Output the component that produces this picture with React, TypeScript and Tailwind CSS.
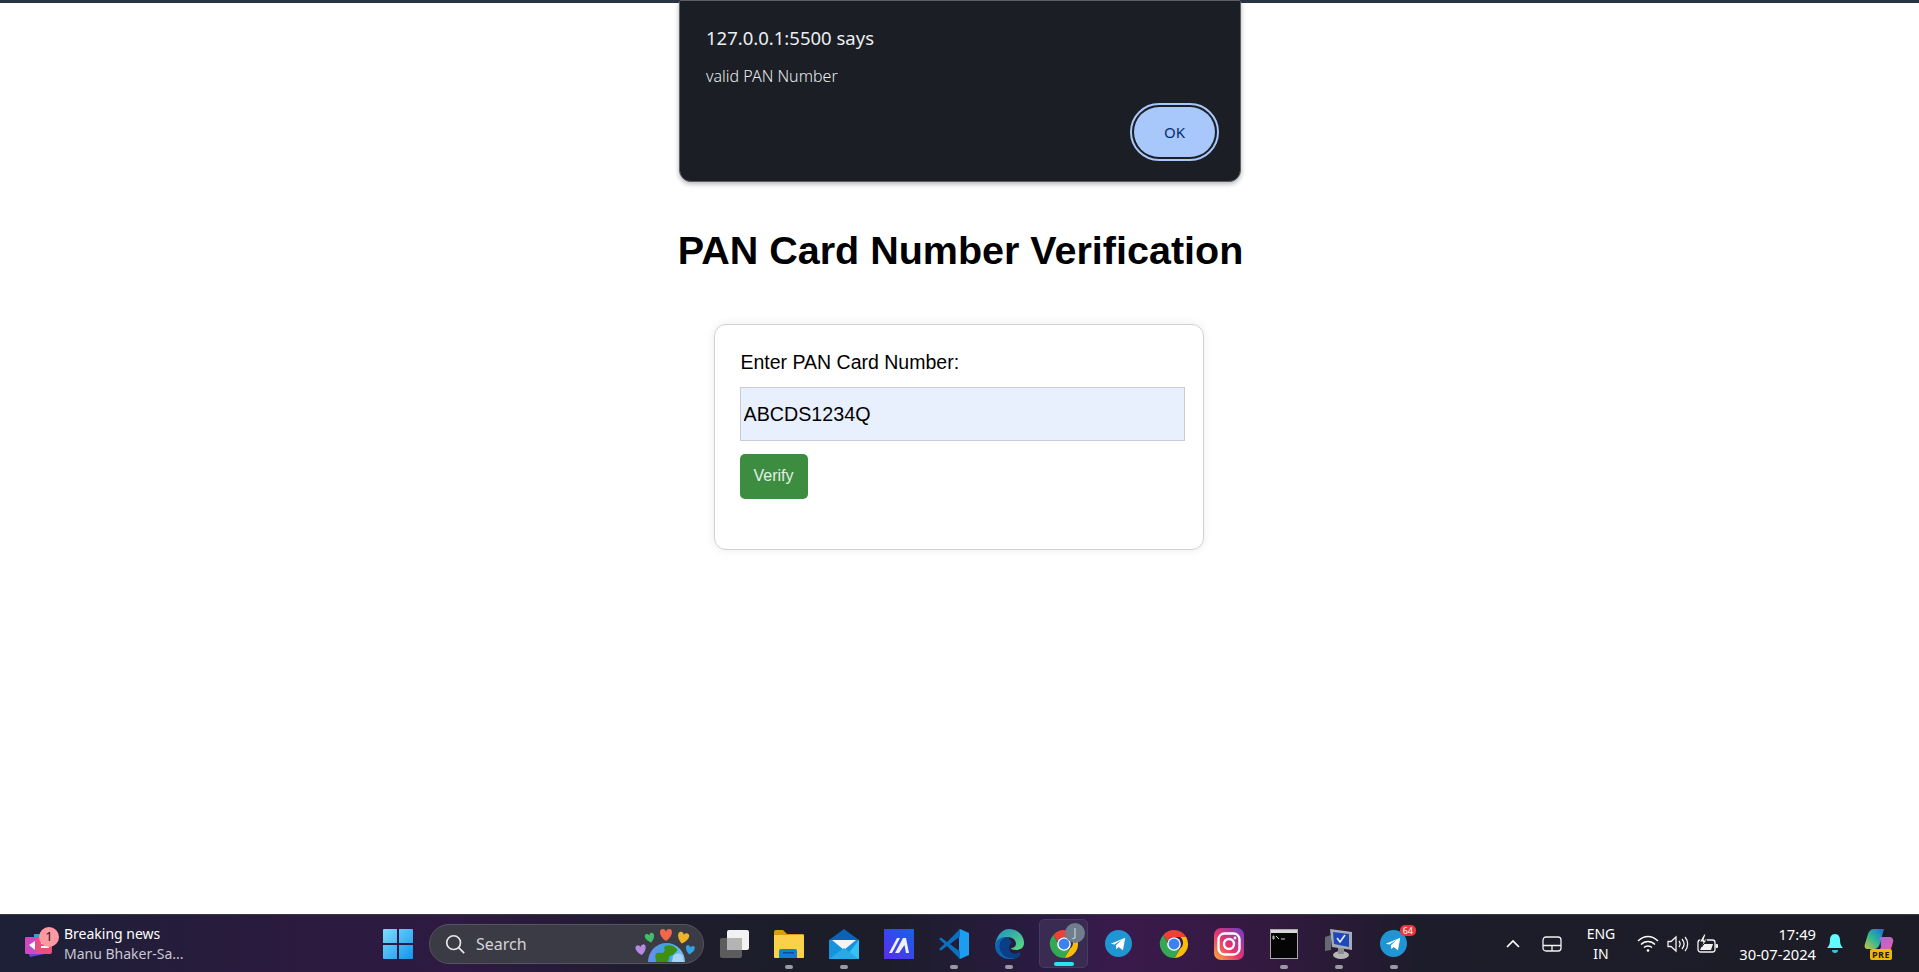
import React from "react";

const Chrome = ({ size = 30 }: { size?: number }) => (
  <svg width={size} height={size} viewBox="0 0 32 32">
    <path d="M16 1a15 15 0 0 1 13 7.5H16a7.5 7.5 0 0 0-7 4.700L4.600 6.300A15 15 0 0 1 16 1z" fill="#ea4335" />
    <path d="M29 8.500A15 15 0 0 1 16.500 31l6-10.300A7.500 7.500 0 0 0 22.500 8.500z" fill="#fbbc04" />
    <path d="M16.500 31A15 15 0 0 1 4.600 6.300l6.400 11.200a7.500 7.500 0 0 0 11.500 3.200z" fill="#34a853" />
    <circle cx="16" cy="16" r="7.300" fill="#fff" />
    <circle cx="16" cy="16" r="5.800" fill="#3b82f0" />
  </svg>
);

const Telegram = ({ size = 27 }: { size?: number }) => (
  <svg width={size} height={size} viewBox="0 0 28 28">
    <circle cx="14" cy="14" r="14" fill="#1f96d3" />
    <path d="M6 14.200 21 8l-2.400 13-4.500-3.300-2.300 2.300-.6-4.200 6.300-5.600-7.800 4.800z" fill="#fff" />
  </svg>
);

const heart = "M0 4.500C-6 0-5-4.500-2.500-4.500-1-4.500-.3-3.500 0-2.500.3-3.500 1-4.500 2.500-4.500 5-4.500 6 0 0 4.500z";

const icons: { key: string; node: React.ReactNode; dot?: boolean }[] = [
  {
    key: "taskview",
    node: (
      <svg width="30" height="30" viewBox="0 0 30 30">
        <rect x="1" y="9" width="22" height="20" rx="2" fill="#5c5c5c" />
        <rect x="8" y="1" width="22" height="20" rx="2" fill="#f2f2f2" />
        <rect x="8" y="9" width="15" height="12" fill="#b4b4b4" />
      </svg>
    ),
  },
  {
    key: "explorer",
    dot: true,
    node: (
      <svg width="32" height="30" viewBox="0 0 32 30">
        <path d="M1 3a2 2 0 0 1 2-2h7l4 4h16a1 1 0 0 1 1 1v4H1z" fill="#d99e0c" />
        <path d="M1 6h29a1 1 0 0 1 1 1v21a1 1 0 0 1-1 1H2a1 1 0 0 1-1-1z" fill="#fbd04b" />
        <path d="M6 22a2 2 0 0 1 2-2h14a2 2 0 0 1 2 2v7H6z" fill="#0f7fd0" />
        <rect x="10" y="23" width="11" height="1.500" fill="#0a4f8c" />
      </svg>
    ),
  },
  {
    key: "mail",
    dot: true,
    node: (
      <svg width="32" height="30" viewBox="0 0 32 30">
        <path d="M1 11 16 0l15 11v4H1z" fill="#0c62b5" />
        <path d="M1 11h30v19H1z" fill="#1593dd" />
        <path d="M31 11v19H16z" fill="#34c3f2" />
        <path d="M4 11h24L16 21z" fill="#f4f4f4" />
        <path d="M1 30 16 19l15 11z" fill="#27abe8" />
      </svg>
    ),
  },
  {
    key: "mathworks",
    node: (
      <svg width="30" height="30" viewBox="0 0 30 30">
        <defs>
          <linearGradient id="ma" x1="0" y1="1" x2="1" y2="0">
            <stop offset="0" stopColor="#5a2bf5" />
            <stop offset="1" stopColor="#1663e0" />
          </linearGradient>
        </defs>
        <rect width="30" height="30" fill="url(#ma)" />
        <path d="M5 24 13 9h3L8 24zM11 24 19 9h3l3 15h-3l-1.500-8L15 24z" fill="#eef2ff" />
      </svg>
    ),
  },
  {
    key: "vscode",
    dot: true,
    node: (
      <svg width="32" height="32" viewBox="0 0 32 32">
        <path d="M22 1 31 5v22l-9 4-1-1V2z" fill="#1b9df0" />
        <path d="M22 1 9 14 3 9.500 1 11l5.500 5L1 21l2 1.500L9 18l13 13v-7.500L12 16l10-7.500z" fill="#0a70bf" />
      </svg>
    ),
  },
  {
    key: "edge",
    dot: true,
    node: (
      <svg width="30" height="30" viewBox="0 0 30 30">
        <defs>
          <linearGradient id="edgeTop" x1="0" y1="0" x2="1" y2="1">
            <stop offset="0" stopColor="#1a8fc9" />
            <stop offset="1" stopColor="#5fdc7a" />
          </linearGradient>
        </defs>
        <path d="M15 0C23 0 30 6 30 14c0 5-4 7-8 7-3 0-5-1-5-2 3 0 5-2 5-4 0-5-6-8-11-6-4 1-8 5-10 8C2 7 8 0 15 0z" fill="url(#edgeTop)" />
        <path d="M1 17C2 10 7 8 12 8c-5 2-7 7-6 12 1 5 6 9 12 9 3 0 6-1 8-3-2 3-6 4-11 4C8 30 1 24 1 17z" fill="#0d63b5" />
        <path d="M12 8c-5 2-7 7-6 12 1 5 6 9 12 9 3 0 6-1 8-3v-3c-3 2-7 2-9 0-3-3-2-7 1-9-1-3-4-6-6-6z" fill="#0a3f86" />
      </svg>
    ),
  },
  { key: "chrome-active", node: null },
  { key: "telegram", node: <Telegram /> },
  { key: "chrome", node: <Chrome /> },
  {
    key: "instagram",
    node: (
      <svg width="30" height="32" viewBox="0 0 30 32">
        <defs>
          <linearGradient id="ig" x1="0" y1="1" x2="1" y2="0">
            <stop offset="0" stopColor="#fbb03b" />
            <stop offset="0.45" stopColor="#e8336d" />
            <stop offset="1" stopColor="#6a3fc9" />
          </linearGradient>
        </defs>
        <rect width="30" height="32" rx="7" fill="url(#ig)" />
        <rect x="4.500" y="5.500" width="21" height="21" rx="6" fill="none" stroke="#fff" strokeWidth="2.400" />
        <circle cx="15" cy="16" r="5" fill="none" stroke="#fff" strokeWidth="2.400" />
        <circle cx="21" cy="10" r="1.400" fill="#fff" />
      </svg>
    ),
  },
  {
    key: "terminal",
    dot: true,
    node: (
      <svg width="28" height="30" viewBox="0 0 28 30">
        <rect width="28" height="30" fill="#a9a9a9" />
        <rect x="1" y="1" width="26" height="3" fill="#d8d8d8" />
        <rect x="1" y="4" width="26" height="25" fill="#050505" />
        <path d="M3 7h1v3H3zM6 7l3 3M11 10h4" stroke="#cfcfcf" strokeWidth="1" fill="none" />
      </svg>
    ),
  },
  {
    key: "network",
    dot: true,
    node: (
      <svg width="30" height="32" viewBox="0 0 30 32">
        <path d="M6 1 28 4v18L8 19z" fill="#a5acb8" />
        <path d="M9 4 25 6v13L10 16z" fill="#1e48b8" />
        <path d="M13 10l3 4 5-7" fill="none" stroke="#e8eefc" strokeWidth="1.600" />
        <path d="M1 9l6-2v15l-6 1z" fill="#656a72" />
        <ellipse cx="17" cy="27" rx="8" ry="4" fill="#b6b6b6" />
        <rect x="14" y="20" width="6" height="6" fill="#8e8e8e" />
      </svg>
    ),
  },
  {
    key: "telegram-badge",
    dot: true,
    node: (
      <div className="relative">
        <Telegram />
        <span className="absolute -top-[5px] -right-[9px] rounded-[5px] bg-[#e5383b] px-[3px] font-['Noto_Sans',sans-serif] text-[9px] leading-[11px] text-white">
          64
        </span>
      </div>
    ),
  },
];

function News() {
  return (
    <div className="ml-[25px] flex w-[190px] items-center">
      <div className="relative h-[32px] w-[32px] shrink-0">
        <svg width="30" height="30" viewBox="0 0 30 30" className="absolute left-0 top-[4px]">
          <path d="M3 20l20-3 1 4-19 4z" fill="#6d43d8" />
          <path d="M9 2h13v6H9z" fill="#2f9fe0" />
          <rect x="0" y="5" width="27" height="17" rx="2" fill="#ec4f7c" />
          <path d="M0 7a2 2 0 0 1 2-2h9v17H2a2 2 0 0 1-2-2z" fill="#c94bc4" />
          <path d="M4 13l6-4v9z" fill="#fff" />
          <path d="M16 11h8M16 15h8" stroke="#fff" strokeWidth="1.800" />
        </svg>
        <span className="absolute left-[14px] -top-[1px] flex h-[20px] w-[20px] items-center justify-center rounded-full bg-[#ff9aa2] text-[13px] text-[#2a1620]">
          1
        </span>
      </div>
      <div className="ml-[7px] text-[14px] leading-[20px]">
        <div className="text-white">Breaking news</div>
        <div className="text-[#c9c6d0]">Manu Bhaker-Sa...</div>
      </div>
    </div>
  );
}

function SearchBox() {
  return (
    <div className="ml-[16px] mr-[1px] flex h-[40px] w-[275px] items-center rounded-full border border-[#55555f] bg-[#3b3b46] pl-[14px]">
      <svg width="22" height="22" viewBox="0 0 24 24" fill="none" stroke="#e8e8e8" strokeWidth="1.800">
        <circle cx="10.500" cy="10.500" r="7.500" />
        <path d="m16 16 6 6" />
      </svg>
      <span className="ml-[10px] text-[16px] text-[#d4d4d8]">Search</span>
      <svg width="62" height="38" viewBox="0 0 62 38" className="ml-auto mr-[6px]">
        <defs>
          <linearGradient id="earth" x1="0" y1="0" x2="1" y2="0">
            <stop offset="0" stopColor="#6f8df0" />
            <stop offset="0.5" stopColor="#38a3dc" />
            <stop offset="1" stopColor="#7cc4ee" />
          </linearGradient>
        </defs>
        <path d="M13 37a18.500 19 0 0 1 37 0z" fill="url(#earth)" />
        <path d="M21 37c0-4-2-7 1-9 3-1 5 1 7-1 2-3-1-4 1-6 5-2 9 0 12 3 1 2-2 3-3 5-2 2-5 1-5 4l-1 4z" fill="#3f8f10" />
        <path d="M38 31c3-3 6-3 9-1l2 7H37z" fill="#a6d4f2" />
        <g transform="translate(6 25) rotate(-10) scale(1.150)"><path d={heart} fill="#b58ae0" /></g>
        <g transform="translate(15 13) rotate(-15) scale(1.050)"><path d={heart} fill="#3fbf6a" /></g>
        <g transform="translate(31 10) scale(1.350)"><path d={heart} fill="#f2664a" /></g>
        <g transform="translate(48 13) rotate(15) scale(1.250)"><path d={heart} fill="#f0b429" /></g>
        <g transform="translate(55 25) rotate(10)"><path d={heart} fill="#2fa3e6" /></g>
      </svg>
    </div>
  );
}

function TaskIcons() {
  return (
    <div className="ml-[1px] flex h-full">
      {icons.map((ic) =>
        ic.key === "chrome-active" ? (
          <div key={ic.key} className="relative flex h-full w-[55px] items-center justify-center">
            <div className="relative flex h-[49px] w-[49px] items-center justify-center rounded-[5px] border border-[#4a3a62] bg-[#3a2b52]">
              <Chrome />
              <span className="absolute right-[2px] top-[3px] flex h-[20px] w-[20px] items-center justify-center rounded-full bg-[#6f7d8c] text-[12px] text-[#c8d0d8]">
                J
              </span>
              <span className="absolute bottom-[1px] left-[14px] h-[4px] w-[20px] rounded-full bg-[#22e6f2]" />
            </div>
          </div>
        ) : (
          <div key={ic.key} className="relative flex h-full w-[55px] items-center justify-center">
            {ic.node}
            {ic.dot && (
              <span className="absolute bottom-[3px] left-[24px] h-[4px] w-[8px] rounded-full bg-[#9a9aa2]" />
            )}
          </div>
        )
      )}
    </div>
  );
}

function Tray() {
  return (
    <div className="ml-auto flex h-full items-center text-white">
      <svg width="18" height="18" viewBox="0 0 18 18" fill="none" stroke="#fff" strokeWidth="1.700">
        <path d="m3 12 6-6 6 6" />
      </svg>
      <svg width="20" height="16" viewBox="0 0 20 16" fill="none" stroke="#f2f2f2" strokeWidth="1.300" className="ml-[20px]">
        <rect x="1" y="1" width="18" height="14" rx="3" />
        <path d="M1 9.500h18M10 9.500V15" />
      </svg>
      <div className="ml-[19px] w-[40px] text-center text-[14px] leading-[20px]">
        <div>ENG</div>
        <div>IN</div>
      </div>
      <svg width="22" height="18" viewBox="0 0 22 18" fill="none" stroke="#fff" strokeWidth="1.400" className="ml-[16px]">
        <path d="M1 6c6-6 14-6 20 0M4 9.500c4-4 10-4 14 0M7 12.500c2-2 6-2 8 0" />
        <circle cx="11" cy="15.500" r="1.300" fill="#fff" stroke="none" />
      </svg>
      <svg width="22" height="18" viewBox="0 0 22 18" fill="none" stroke="#f2f2f2" strokeWidth="1.300" className="ml-[8px]">
        <path d="M1 6.500v5h3l5 4.500V2L4 6.500z" />
        <path d="M12 6c1.500 2 1.500 4 0 6M15 4c2.500 3 2.500 7 0 10M18 2c3.500 4 3.500 10 0 14" />
      </svg>
      <svg width="22" height="20" viewBox="0 0 22 20" className="ml-[8px]">
        <rect x="1" y="6" width="17" height="12" rx="2.500" fill="none" stroke="#f2f2f2" strokeWidth="1.300" />
        <rect x="18.500" y="10" width="2.500" height="4" rx="1" fill="#f2f2f2" />
        <path d="M3 16h11l2-6H6z" fill="#f2f2f2" />
        <path d="M7 0 2.500 8H6l-1.500 5L10 6H7l2-6z" fill="#f2f2f2" stroke="#1c1c26" strokeWidth="1" />
      </svg>
      <div className="ml-[15px] w-[82px] text-right text-[14.7px] leading-[20px]">
        <div>17:49</div>
        <div>30-07-2024</div>
      </div>
      <svg width="18" height="22" viewBox="0 0 18 22" className="ml-[10px]">
        <path d="M9 1c3.500 0 5 3 5 6 0 4 1 6 3 8H1c2-2 3-4 3-8 0-3 1.500-6 5-6z" fill="#5ffbff" />
        <path d="M6 17h6c0 2-1 3-3 3s-3-1-3-3z" fill="#35c8d8" />
      </svg>
      <div className="relative ml-[20px] mr-[25px] h-[32px] w-[30px]">
        <svg width="30" height="26" viewBox="0 0 30 26">
          <defs>
            <linearGradient id="co1" x1="0" y1="1" x2="1" y2="0">
              <stop offset="0" stopColor="#c6c83a" />
              <stop offset="0.5" stopColor="#2bb59a" />
              <stop offset="1" stopColor="#2068e0" />
            </linearGradient>
            <linearGradient id="co2" x1="0" y1="0" x2="1" y2="1">
              <stop offset="0" stopColor="#9a6ae8" />
              <stop offset="1" stopColor="#ee5f9b" />
            </linearGradient>
          </defs>
          <path d="M10 1h10l-4 14c-1 4-3 6-7 6H4c-3 0-4-2-3-5l3-10c1-3 3-5 6-5z" fill="url(#co1)" />
          <path d="M16 9h9c3 0 5 2 4 5l-2 7c-1 3-3 4-6 4H11c3-1 5-3 6-6z" fill="url(#co2)" />
        </svg>
        <span className="absolute bottom-0 left-[6px] rounded-[2px] bg-[#f2b705] px-[2px] text-[9px] font-bold leading-[11px] tracking-[0.5px] text-[#1c1c1c]">
          PRE
        </span>
      </div>
    </div>
  );
}

export default function App() {
  return (
    <div className="flex h-[972px] w-full flex-col overflow-hidden bg-white font-['Liberation_Sans',Arial,sans-serif]">
      <div className="h-[3px] bg-[#2b3445]" />
      <main className="relative flex flex-1 flex-col items-center">
        <div className="absolute left-[679px] -top-[3px] h-[182px] w-[562px] rounded-b-[12px] rounded-t-[2px] border border-[#5a5e66] bg-[#1b1e24] pl-[26px] pt-[25px] font-['Noto_Sans',sans-serif] shadow-[0_2px_5px_rgba(0,0,0,0.3)]">
          <div className="text-[18.5px] leading-[24px] text-[#eceef2]">127.0.0.1:5500 says</div>
          <div className="mt-[16px] text-[16px] font-light leading-[20px] text-[#e8eaee]">valid PAN Number</div>
          <button className="absolute bottom-[24px] right-[25px] h-[50px] w-[81px] rounded-full bg-[#a8c7fa] text-[15px] text-[#062e6f] outline-2 outline-offset-2 outline-[#a8c7fa]">
            OK
          </button>
        </div>
        <h1 className="ml-[2px] mt-[224px] text-[39.5px] font-bold leading-[46px] text-black">
          PAN Card Number Verification
        </h1>
        <div className="ml-[-2px] mt-[51px] h-[226px] w-[490px] rounded-[12px] border border-[#d2d2d2] bg-white px-[25px] pt-[26px] shadow-[0_0_10px_rgba(0,0,0,0.08)]">
          <label className="ml-[1px] block text-[19.5px] leading-[23px] text-black">Enter PAN Card Number:</label>
          <input
            readOnly
            value="ABCDS1234Q"
            className="mt-[13px] block h-[54px] w-[445px] border border-[#c8cbd2] bg-[#e8f0fe] px-[3px] text-[19.7px] text-black outline-none"
          />
          <button className="mt-[13px] h-[45px] w-[68px] rounded-[5px] bg-[#3c8d40] pb-[2px] text-[16px] font-light text-[#e6efe6]">
            Verify
          </button>
        </div>
      </main>
      <footer className="flex h-[58px] w-full items-center border-t border-[#3a3a44] bg-[linear-gradient(90deg,#1c2036_0%,#2c1a3f_16%,#2e1a42_24%,#1d1d2b_36%,#1c1d29_46%,#2b1b44_55%,#3a1a4c_58%,#33193f_66%,#1d1c2a_74%,#1c1c26_100%)] font-['Noto_Sans',sans-serif]">
        <News />
        <svg width="30" height="30" viewBox="0 0 30 30" className="ml-[168px] shrink-0">
          <defs>
            <linearGradient id="win" x1="0" y1="0" x2="1" y2="1">
              <stop offset="0" stopColor="#7fdcfb" />
              <stop offset="1" stopColor="#1095ee" />
            </linearGradient>
          </defs>
          <path d="M0 1a1 1 0 0 1 1-1h13v14H0zM16 0h13a1 1 0 0 1 1 1v13H16zM0 16h14v14H1a1 1 0 0 1-1-1zM16 16h14v13a1 1 0 0 1-1 1H16z" fill="url(#win)" />
        </svg>
        <SearchBox />
        <TaskIcons />
        <Tray />
      </footer>
    </div>
  );
}
